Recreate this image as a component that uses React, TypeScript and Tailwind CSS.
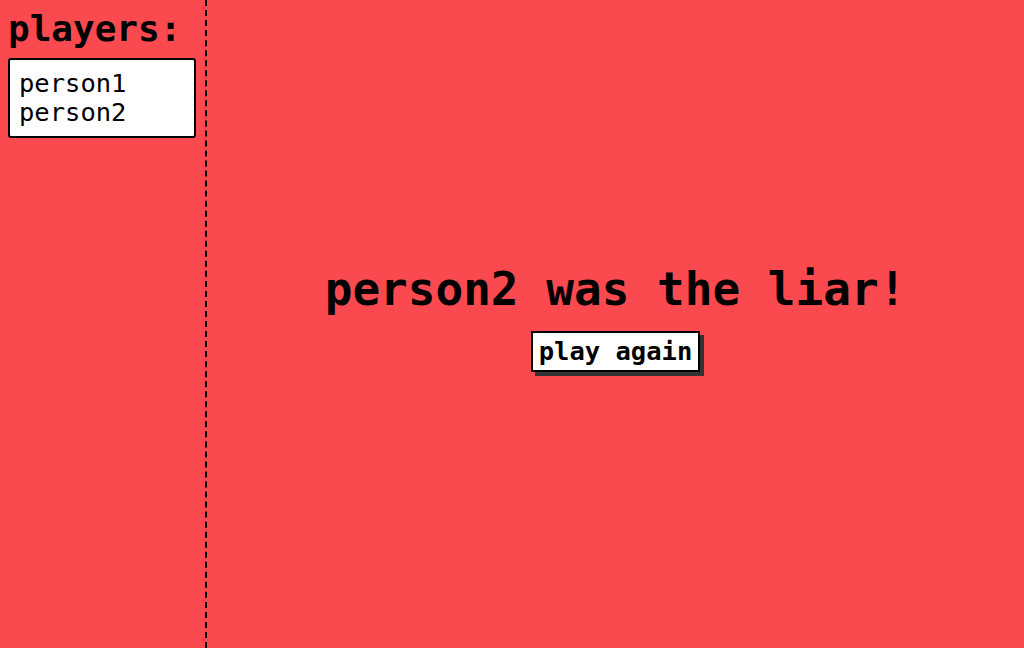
const players = ['person1', 'person2']

export default function App() {
  return (
    <div className="flex h-[648px] w-[1024px] overflow-hidden bg-[#fa4a4f] font-['DejaVu_Sans_Mono',monospace] text-black">
      <aside className="flex w-[207px] shrink-0 flex-col border-r-2 border-dashed border-black pl-[8px] pr-[9px]">
        <h2 className="mt-[9px] text-[36px] font-bold leading-[40px]">players:</h2>
        <ul className="mt-[9px] rounded-[3px] border-2 border-black bg-white px-[9px] py-[9px] text-[25.5px] leading-[29px]">
          {players.map((p) => (
            <li key={p}>{p}</li>
          ))}
        </ul>
      </aside>

      <main className="flex flex-1 flex-col items-center justify-center pb-[16px]">
        <h1 className="text-[46px] font-bold leading-[56px]">person2 was the liar!</h1>
        <button className="mt-[14px] border-2 border-black bg-white px-[6px] text-[25.5px] font-bold leading-[37px] shadow-[4px_4px_0_#333]">
          play again
        </button>
      </main>
    </div>
  )
}
